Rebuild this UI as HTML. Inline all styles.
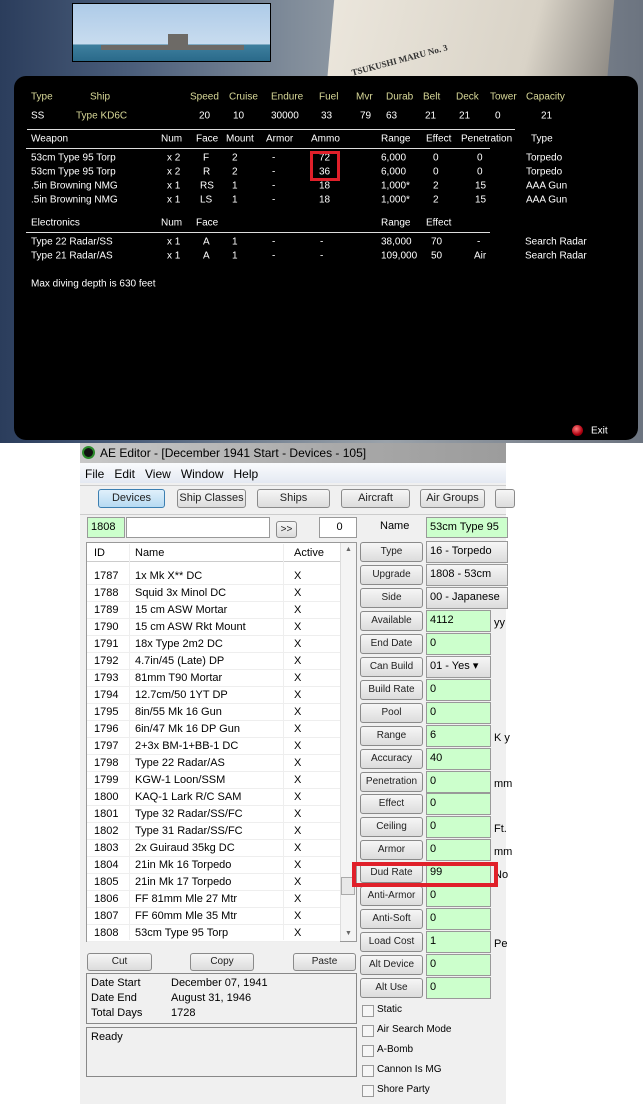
<!DOCTYPE html><html><head><style>
*{margin:0;padding:0;box-sizing:border-box}
body{width:643px;height:1104px;position:relative;background:#fff;overflow:hidden;font-family:"Liberation Sans",sans-serif}
.a{position:absolute;white-space:nowrap}
#top{position:absolute;left:0;top:0;width:643px;height:443px;background:linear-gradient(90deg,#2b3d5c 0%,#4a5d7a 20%,#7f8b99 45%,#9aa2aa 60%,#6c7480 100%)}
#paper{position:absolute;left:330px;top:0;width:280px;height:95px;background:linear-gradient(100deg,#ebe6dc,#d9d3c7 70%,#8e8a84);transform:skewX(-5deg)}
#panel{position:absolute;left:14px;top:76px;width:624px;height:364px;background:#000;border-radius:12px}
.t{color:#fff;font-size:10px;position:absolute;white-space:nowrap;transform:translateY(-50%)}
.y{color:#d8d898}
.ln{position:absolute;height:1px;background:#ddd}
#ed{position:absolute;left:80px;top:443px;width:426px;height:661px;background:#f0f0f0;font-size:11px;color:#000}
.b{position:absolute;border:1px solid #8a8a8a;border-radius:3px;background:linear-gradient(#f6f6f6,#dcdcdc);font-size:10px;text-align:center;color:#222}
.g{position:absolute;border:1px solid #999;background:#ccffcc;font-size:11px;padding-left:3px}
.row{position:absolute;left:7px;width:253px;height:17px;font-size:11px;border-bottom:1px solid #eee}
.cb{position:absolute;left:282px;width:12px;height:12px;border:1px solid #999;background:#f6f6f6}
</style></head><body>
<div id="top">
<div id="paper"></div>
<div style="position:absolute;left:72px;top:3px;width:199px;height:59px;border:1px solid #000;background:linear-gradient(#aecbe8 0%,#c8dcef 70%,#3e7f9e 72%,#2a6a8a 100%)"><div style="position:absolute;left:28px;top:41px;width:143px;height:5px;background:#6d6a66"></div><div style="position:absolute;left:95px;top:30px;width:20px;height:12px;background:#6d6a66"></div></div>
<div style="position:absolute;left:350px;top:55px;font:bold 9px 'Liberation Serif',serif;color:#333;transform:rotate(-15deg)">TSUKUSHI MARU No. 3</div>
</div>
<div id="panel"></div>
<div class="t y" style="left:31px;top:97px">Type</div><div class="t y" style="left:90px;top:97px">Ship</div><div class="t y" style="left:190px;top:97px">Speed</div><div class="t y" style="left:229px;top:97px">Cruise</div><div class="t y" style="left:271px;top:97px">Endure</div><div class="t y" style="left:319px;top:97px">Fuel</div><div class="t y" style="left:356px;top:97px">Mvr</div><div class="t y" style="left:386px;top:97px">Durab</div><div class="t y" style="left:423px;top:97px">Belt</div><div class="t y" style="left:456px;top:97px">Deck</div><div class="t y" style="left:490px;top:97px">Tower</div><div class="t y" style="left:526px;top:97px">Capacity</div>
<div class="ln" style="left:27px;top:129px;width:488px"></div>
<div class="t" style="left:31px;top:116px">SS</div><div class="t y" style="left:76px;top:116px">Type KD6C</div><div class="t" style="left:199px;top:116px">20</div><div class="t" style="left:233px;top:116px">10</div><div class="t" style="left:271px;top:116px">30000</div><div class="t" style="left:321px;top:116px">33</div><div class="t" style="left:360px;top:116px">79</div><div class="t" style="left:386px;top:116px">63</div><div class="t" style="left:425px;top:116px">21</div><div class="t" style="left:459px;top:116px">21</div><div class="t" style="left:495px;top:116px">0</div><div class="t" style="left:541px;top:116px">21</div>
<div class="t" style="left:31px;top:139px">Weapon</div><div class="t" style="left:161px;top:139px">Num</div><div class="t" style="left:196px;top:139px">Face</div><div class="t" style="left:226px;top:139px">Mount</div><div class="t" style="left:266px;top:139px">Armor</div><div class="t" style="left:311px;top:139px">Ammo</div><div class="t" style="left:381px;top:139px">Range</div><div class="t" style="left:426px;top:139px">Effect</div><div class="t" style="left:461px;top:139px">Penetration</div><div class="t" style="left:531px;top:139px">Type</div>
<div class="ln" style="left:26px;top:148px;width:464px"></div>
<div class="t" style="left:31px;top:158px">53cm Type 95 Torp</div><div class="t" style="left:167px;top:158px">x 2</div><div class="t" style="left:203px;top:158px">F</div><div class="t" style="left:232px;top:158px">2</div><div class="t" style="left:272px;top:158px">-</div><div class="t" style="left:319px;top:158px">72</div><div class="t" style="left:381px;top:158px">6,000</div><div class="t" style="left:433px;top:158px">0</div><div class="t" style="left:477px;top:158px">0</div><div class="t" style="left:526px;top:158px">Torpedo</div>
<div class="t" style="left:31px;top:172px">53cm Type 95 Torp</div><div class="t" style="left:167px;top:172px">x 2</div><div class="t" style="left:203px;top:172px">R</div><div class="t" style="left:232px;top:172px">2</div><div class="t" style="left:272px;top:172px">-</div><div class="t" style="left:319px;top:172px">36</div><div class="t" style="left:381px;top:172px">6,000</div><div class="t" style="left:433px;top:172px">0</div><div class="t" style="left:477px;top:172px">0</div><div class="t" style="left:526px;top:172px">Torpedo</div>
<div class="t" style="left:31px;top:186px">.5in Browning NMG</div><div class="t" style="left:167px;top:186px">x 1</div><div class="t" style="left:200px;top:186px">RS</div><div class="t" style="left:232px;top:186px">1</div><div class="t" style="left:272px;top:186px">-</div><div class="t" style="left:319px;top:186px">18</div><div class="t" style="left:381px;top:186px">1,000*</div><div class="t" style="left:433px;top:186px">2</div><div class="t" style="left:475px;top:186px">15</div><div class="t" style="left:526px;top:186px">AAA Gun</div>
<div class="t" style="left:31px;top:200px">.5in Browning NMG</div><div class="t" style="left:167px;top:200px">x 1</div><div class="t" style="left:200px;top:200px">LS</div><div class="t" style="left:232px;top:200px">1</div><div class="t" style="left:272px;top:200px">-</div><div class="t" style="left:319px;top:200px">18</div><div class="t" style="left:381px;top:200px">1,000*</div><div class="t" style="left:433px;top:200px">2</div><div class="t" style="left:475px;top:200px">15</div><div class="t" style="left:526px;top:200px">AAA Gun</div>
<div style="position:absolute;left:310px;top:151px;width:30px;height:30px;border:3px solid #e0202a"></div>
<div class="t" style="left:31px;top:223px">Electronics</div><div class="t" style="left:161px;top:223px">Num</div><div class="t" style="left:196px;top:223px">Face</div><div class="t" style="left:381px;top:223px">Range</div><div class="t" style="left:426px;top:223px">Effect</div>
<div class="ln" style="left:26px;top:232px;width:464px"></div>
<div class="t" style="left:31px;top:242px">Type 22 Radar/SS</div><div class="t" style="left:167px;top:242px">x 1</div><div class="t" style="left:203px;top:242px">A</div><div class="t" style="left:232px;top:242px">1</div><div class="t" style="left:272px;top:242px">-</div><div class="t" style="left:320px;top:242px">-</div><div class="t" style="left:381px;top:242px">38,000</div><div class="t" style="left:431px;top:242px">70</div><div class="t" style="left:477px;top:242px">-</div><div class="t" style="left:525px;top:242px">Search Radar</div>
<div class="t" style="left:31px;top:256px">Type 21 Radar/AS</div><div class="t" style="left:167px;top:256px">x 1</div><div class="t" style="left:203px;top:256px">A</div><div class="t" style="left:232px;top:256px">1</div><div class="t" style="left:272px;top:256px">-</div><div class="t" style="left:320px;top:256px">-</div><div class="t" style="left:381px;top:256px">109,000</div><div class="t" style="left:431px;top:256px">50</div><div class="t" style="left:474px;top:256px">Air</div><div class="t" style="left:525px;top:256px">Search Radar</div>
<div class="t" style="left:31px;top:284px">Max diving depth is 630 feet</div>
<div style="position:absolute;left:572px;top:425px;width:11px;height:11px;border-radius:50%;background:radial-gradient(circle at 40% 35%,#ff8080,#b00010 60%,#400)"></div>
<div class="t" style="left:591px;top:431px">Exit</div>

<div id="ed">
<div style="position:absolute;left:0;top:0;width:426px;height:20px;background:linear-gradient(90deg,#c8c8c8,#a9a9a9 60%,#9c9c9c)"></div>
<div style="position:absolute;left:2px;top:3px;width:13px;height:13px;border-radius:50%;background:#111;border:2px solid #2a8a2a"></div>
<div class="a" style="left:20px;top:3px;font-size:12px">AE Editor - [December 1941 Start - Devices - 105]</div>
<div style="position:absolute;left:0;top:20px;width:426px;height:20px;background:linear-gradient(#fafbfd,#e4e9f2)"></div>
<div class="a" style="left:5px;top:24px;font-size:12px">File&nbsp;&nbsp; Edit&nbsp;&nbsp; View&nbsp;&nbsp; Window&nbsp;&nbsp; Help</div>
<div style="position:absolute;left:0;top:42px;width:426px;height:30px;background:#f0f0f0;border-top:1px solid #ccc;border-bottom:1px solid #ccc"></div>
<div class="b" style="left:18px;top:46px;width:67px;height:19px;line-height:17px;font-size:11px;background:linear-gradient(#e0f0fb,#b6daf2);border-color:#3c7fb1">Devices</div>
<div class="b" style="left:97px;top:46px;width:69px;height:19px;line-height:17px;font-size:11px">Ship Classes</div>
<div class="b" style="left:177px;top:46px;width:73px;height:19px;line-height:17px;font-size:11px">Ships</div>
<div class="b" style="left:261px;top:46px;width:69px;height:19px;line-height:17px;font-size:11px">Aircraft</div>
<div class="b" style="left:340px;top:46px;width:65px;height:19px;line-height:17px;font-size:11px">Air Groups</div>
<div class="b" style="left:415px;top:46px;width:20px;height:19px"></div>
<div class="g" style="left:7px;top:74px;width:38px;height:21px;line-height:19px">1808</div>
<div class="g" style="left:46px;top:74px;width:144px;height:21px;background:#fff"></div>
<div class="b" style="left:196px;top:78px;width:21px;height:17px;line-height:15px">&gt;&gt;</div>
<div class="g" style="left:239px;top:74px;width:38px;height:21px;background:#fff;text-align:center;line-height:19px">0</div>
<div style="position:absolute;left:6px;top:99px;width:271px;height:400px;background:#fff;border:1px solid #999"></div>
<div style="position:absolute;left:260px;top:100px;width:16px;height:398px;background:#f4f4f4;border-left:1px solid #ddd"></div>
<div class="a" style="left:265px;top:103px;font-size:7px;color:#666">▲</div><div class="a" style="left:265px;top:487px;font-size:7px;color:#666">▼</div>
<div style="position:absolute;left:261px;top:434px;width:14px;height:18px;background:#e8e8e8;border:1px solid #aaa"></div>
<div class="row" style="top:102px;border-bottom:1px solid #ccc"><span class="a" style="left:7px;top:2px">ID</span><span class="a" style="left:48px;top:2px">Name</span><span class="a" style="left:207px;top:2px">Active</span></div>
<div style="position:absolute;left:49px;top:101px;width:1px;height:396px;background:#eee"></div>
<div style="position:absolute;left:203px;top:101px;width:1px;height:396px;background:#eee"></div>
<div id="rows"></div>
<div class="b" style="left:7px;top:510px;width:65px;height:18px;line-height:16px">Cut</div>
<div class="b" style="left:110px;top:510px;width:64px;height:18px;line-height:16px">Copy</div>
<div class="b" style="left:213px;top:510px;width:63px;height:18px;line-height:16px">Paste</div>
<div style="position:absolute;left:6px;top:530px;width:271px;height:51px;border:1px solid #888"></div>
<div class="a" style="left:11px;top:534px">Date Start</div><div class="a" style="left:91px;top:534px">December 07, 1941</div>
<div class="a" style="left:11px;top:549px">Date End</div><div class="a" style="left:91px;top:549px">August 31, 1946</div>
<div class="a" style="left:11px;top:564px">Total Days</div><div class="a" style="left:91px;top:564px">1728</div>
<div style="position:absolute;left:6px;top:584px;width:271px;height:50px;border:1px solid #888"></div>
<div class="a" style="left:11px;top:588px">Ready</div>
<div class="a" style="left:300px;top:77px;font-size:11px">Name</div>
<div class="g" style="left:346px;top:74px;width:82px;height:21px;line-height:19px">53cm Type 95 T</div>
<div id="rb"></div>
<div style="position:absolute;left:272px;top:419px;width:146px;height:25px;border:4px solid #e0202a"></div>
</div>
<script>
var ids=[["1787","1x Mk X** DC"],["1788","Squid 3x Minol DC"],["1789","15 cm ASW Mortar"],["1790","15 cm ASW Rkt Mount"],["1791","18x Type 2m2 DC"],["1792","4.7in/45 (Late) DP"],["1793","81mm T90 Mortar"],["1794","12.7cm/50 1YT DP"],["1795","8in/55 Mk 16 Gun"],["1796","6in/47 Mk 16 DP Gun"],["1797","2+3x BM-1+BB-1 DC"],["1798","Type 22 Radar/AS"],["1799","KGW-1 Loon/SSM"],["1800","KAQ-1 Lark R/C SAM"],["1801","Type 32 Radar/SS/FC"],["1802","Type 31 Radar/SS/FC"],["1803","2x Guiraud 35kg DC"],["1804","21in Mk 16 Torpedo"],["1805","21in Mk 17 Torpedo"],["1806","FF 81mm Mle 27 Mtr"],["1807","FF 60mm Mle 35 Mtr"],["1808","53cm Type 95 Torp"]];
var h="";ids.forEach(function(r,i){var t=125+i*17;h+='<div class="row" style="top:'+t+'px"><span class="a" style="left:7px;top:2px">'+r[0]+'</span><span class="a" style="left:48px;top:2px">'+r[1]+'</span><span class="a" style="left:207px;top:2px">X</span></div>';});
document.getElementById("rows").outerHTML=h;
var rb=[["Type","16 - Torpedo",2],["Upgrade","1808 - 53cm Typ",2],["Side","00 - Japanese",2],["Available","4112",1,"yy"],["End Date","0",1],["Can Build","01 - Yes  ▾",3],["Build Rate","0",1],["Pool","0",1],["Range","6",1,"K y"],["Accuracy","40",1],["Penetration","0",1,"mm"],["Effect","0",1],["Ceiling","0",1,"Ft."],["Armor","0",1,"mm"],["Dud Rate","99",1,"No"],["Anti-Armor","0",1],["Anti-Soft","0",1],["Load Cost","1",1,"Pe"],["Alt Device","0",1],["Alt Use","0",1]];
h="";rb.forEach(function(r,i){var c=109+i*22.95;h+='<div class="b" style="left:280px;top:'+(c-10)+'px;width:63px;height:20px;line-height:18px">'+r[0]+'</div>';var w=r[2]==1?65:(r[2]==3?65:82);var bg=r[2]==1?'#ccffcc':'linear-gradient(#f6f6f6,#dcdcdc)';h+='<div class="g" style="left:346px;top:'+(c-11)+'px;width:'+w+'px;height:22px;line-height:18px;background:'+bg+'">'+r[1]+'</div>';if(r[3])h+='<span class="a" style="left:414px;top:'+(c-4)+'px;font-size:11px">'+r[3]+'</span>';});
["Static","Air Search Mode","A-Bomb","Cannon Is MG","Shore Party"].forEach(function(s,i){var c=568+i*20;h+='<div class="cb" style="top:'+(c-6)+'px"></div><span class="a" style="left:297px;top:'+(c-7)+'px;font-size:10px">'+s+'</span>';});
document.getElementById("rb").outerHTML=h;
</script>
</body></html>
